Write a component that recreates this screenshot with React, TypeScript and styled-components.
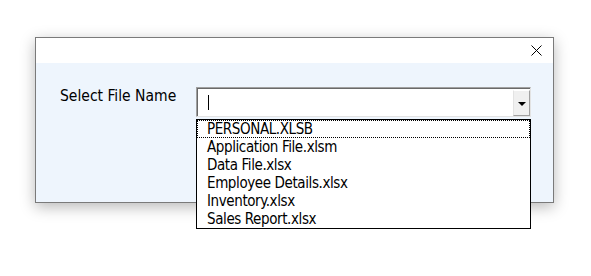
import React from "react";
import styled, { createGlobalStyle } from "styled-components";

const GlobalStyle = createGlobalStyle`
  html, body, #root {
    margin: 0;
    height: 100%;
  }
  body {
    background: #ffffff;
    font-family: "DejaVu Sans Condensed", "DejaVu Sans", sans-serif;
    font-stretch: semi-condensed;
    color: #000;
  }
`;

const Page = styled.div`
  height: 100%;
  box-sizing: border-box;
  padding: 37px 0 0 35px;
`;

const Dialog = styled.div`
  width: 519px;
  box-sizing: border-box;
  border: 1px solid #7a7a7a;
  box-shadow: 0 4px 14px rgba(0, 0, 0, 0.28);
`;

const TitleBar = styled.div`
  height: 25px;
  background: #ffffff;
  display: flex;
  justify-content: flex-end;
  align-items: center;
  padding-right: 11px;
`;

const Body = styled.div`
  height: 139px;
  background: #eef5fd;
  box-sizing: border-box;
  padding: 24px 0 0 24px;
  display: flex;
  align-items: flex-start;
`;

const Label = styled.div`
  width: 136px;
  font-size: 15.5px;
  line-height: 19px;
`;

const Combo = styled.div`
  position: relative;
  width: 335px;
  height: 30px;
  box-sizing: border-box;
  background: #fff;
  border: 1px solid;
  border-color: #a0a0a0 #e3e3e3 #e3e3e3 #a0a0a0;
  box-shadow: inset 1px 1px 0 #696969;
  display: flex;
  align-items: center;
`;

const Field = styled.div`
  flex: 1;
  height: 100%;
  display: flex;
  align-items: center;
  padding-left: 11px;
`;

const Caret = styled.span`
  width: 1px;
  height: 15px;
  background: #000;
`;

const DropButton = styled.div`
  width: 17px;
  height: 26px;
  margin: 1px 0 0 0;
  box-sizing: border-box;
  background: #f0f0f0;
  border: 1px solid;
  border-color: #ffffff #a0a0a0 #a0a0a0 #e3e3e3;
  display: flex;
  align-items: center;
  justify-content: center;
`;

const Arrow = styled.span`
  width: 0;
  height: 0;
  margin-top: 3px;
  border-left: 4px solid transparent;
  border-right: 4px solid transparent;
  border-top: 4px solid #000;
`;

const List = styled.div`
  position: absolute;
  top: 31px;
  left: -1px;
  width: 335px;
  box-sizing: border-box;
  background: #fff;
  border: 1px solid #000;
  z-index: 2;
`;

const Item = styled.div<{ $focused?: boolean }>`
  height: 18px;
  box-sizing: border-box;
  padding-left: 10px;
  font-size: 15px;
  letter-spacing: -0.4px;
  line-height: 18px;
  white-space: nowrap;
  outline: ${(p) => (p.$focused ? "1px dotted #000" : "none")};
  outline-offset: -1px;
`;

const files = [
  "PERSONAL.XLSB",
  "Application File.xlsm",
  "Data File.xlsx",
  "Employee Details.xlsx",
  "Inventory.xlsx",
  "Sales Report.xlsx",
];

const CloseIcon = () => (
  <svg width="11" height="11" viewBox="0 0 11 11">
    <path d="M0.5 0.5 L10.5 10.5 M10.5 0.5 L0.5 10.5" stroke="#000" strokeWidth="1" />
  </svg>
);

export default function App() {
  return (
    <>
      <GlobalStyle />
      <Page>
        <Dialog>
          <TitleBar>
            <CloseIcon />
          </TitleBar>
          <Body>
            <Label>Select File Name</Label>
            <Combo>
              <Field>
                <Caret />
              </Field>
              <DropButton>
                <Arrow />
              </DropButton>
              <List>
                {files.map((f, i) => (
                  <Item key={f} $focused={i === 0}>
                    {f}
                  </Item>
                ))}
              </List>
            </Combo>
          </Body>
        </Dialog>
      </Page>
    </>
  );
}
